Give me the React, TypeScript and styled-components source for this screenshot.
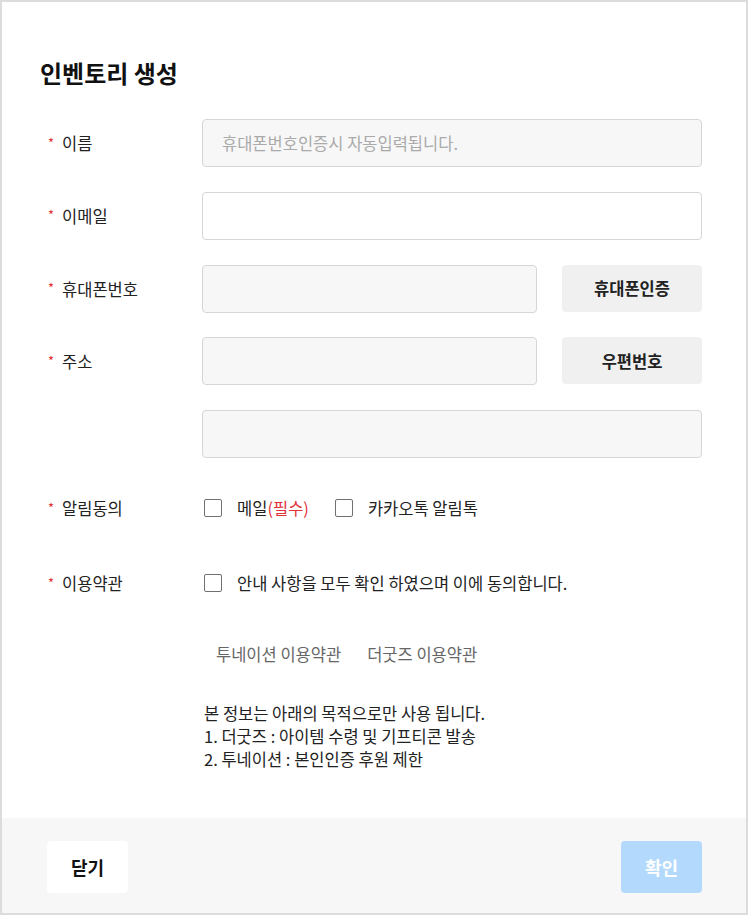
import React from 'react'
import styled, { createGlobalStyle } from 'styled-components'

const GlobalStyle = createGlobalStyle`
    * {
        box-sizing: border-box;
    }
    html, body {
        margin: 0;
        padding: 0;
        background: #fff;
    }
    body {
        font-family: "Noto Sans CJK KR", "Noto Sans", sans-serif;
        color: #222;
    }
`

const App = () => {
    return (
        <>
            <GlobalStyle />
            <Modal>
                <Content>
                    <Title>인벤토리 생성</Title>

                    <Fields>
                        <Row>
                            <Label><Star>*</Star>이름</Label>
                            <Input readOnly placeholder='휴대폰번호인증시 자동입력됩니다.' />
                        </Row>
                        <Row>
                            <Label><Star>*</Star>이메일</Label>
                            <Input $white />
                        </Row>
                        <Row>
                            <Label><Star>*</Star>휴대폰번호</Label>
                            <InputGroup>
                                <Input readOnly />
                                <SideButton>휴대폰인증</SideButton>
                            </InputGroup>
                        </Row>
                        <Row>
                            <Label><Star>*</Star>주소</Label>
                            <InputGroup>
                                <Input readOnly />
                                <SideButton>우편번호</SideButton>
                            </InputGroup>
                        </Row>
                        <Row>
                            <span />
                            <Input readOnly />
                        </Row>
                    </Fields>

                    <CheckRow $top={38}>
                        <Label><Star>*</Star>알림동의</Label>
                        <CheckGroup>
                            <CheckItem>
                                <Box />
                                <span>메일<Required>(필수)</Required></span>
                            </CheckItem>
                            <CheckItem>
                                <Box />
                                <span>카카오톡 알림톡</span>
                            </CheckItem>
                        </CheckGroup>
                    </CheckRow>

                    <CheckRow $top={51}>
                        <Label><Star>*</Star>이용약관</Label>
                        <CheckGroup>
                            <CheckItem>
                                <Box />
                                <span>안내 사항을 모두 확인 하였으며 이에 동의합니다.</span>
                            </CheckItem>
                        </CheckGroup>
                    </CheckRow>

                    <Terms>
                        <TermLink>투네이션 이용약관</TermLink>
                        <TermLink>더굿즈 이용약관</TermLink>
                    </Terms>

                    <Notice>
                        본 정보는 아래의 목적으로만 사용 됩니다.<br />
                        1. 더굿즈 : 아이템 수령 및 기프티콘 발송<br />
                        2. 투네이션 : 본인인증 후원 제한
                    </Notice>
                </Content>

                <Footer>
                    <CloseButton>닫기</CloseButton>
                    <ConfirmButton disabled>확인</ConfirmButton>
                </Footer>
            </Modal>
        </>
    )
}

const Modal = styled.div`
    width: 748px;
    height: 915px;
    border: 2px solid #dcdcdc;
    display: flex;
    flex-direction: column;
    background: #fff;
`

const Content = styled.div`
    flex: 1;
    padding: 56px 44px 0 38px;
`

const Title = styled.h2`
    margin: 0 0 31px;
    font-size: 24px;
    line-height: 30px;
    font-weight: 700;
    color: #111;
`

const Fields = styled.div`
    display: flex;
    flex-direction: column;
    gap: 24.75px;
`

const Row = styled.div`
    display: grid;
    grid-template-columns: 154px 1fr;
    align-items: start;
    padding-left: 8px;
`

const Label = styled.div`
    display: flex;
    align-items: center;
    height: 48px;
    font-size: 16.5px;
    color: #222;
`

const Star = styled.span`
    color: #e0323a;
    font-size: 13px;
    margin-right: 8px;
    position: relative;
    top: -1px;
`

const Input = styled.input<{ $white?: boolean }>`
    width: 100%;
    height: 48px;
    border: 1px solid #d6d6d6;
    border-radius: 4px;
    background: ${({ $white }) => $white ? '#fff' : '#f7f7f7'};
    padding: 0 19px;
    font-family: inherit;
    font-size: 16.5px;
    color: #222;
    outline: none;

    &::placeholder {
        color: #aaa;
    }
`

const InputGroup = styled.div`
    display: flex;
    gap: 25px;
    align-items: flex-start;
`

const SideButton = styled.button`
    flex: 0 0 140px;
    height: 47px;
    border: none;
    border-radius: 4px;
    background: #f0f0f0;
    font-family: inherit;
    font-size: 16.5px;
    font-weight: 700;
    color: #222;
`

const CheckRow = styled(Row)<{ $top: number }>`
    margin-top: ${({ $top }) => $top}px;
    align-items: center;

    ${Label} {
        height: 24px;
    }
`

const CheckGroup = styled.div`
    display: flex;
    align-items: center;
    gap: 26px;
    padding-left: 2px;
`

const CheckItem = styled.label`
    display: flex;
    align-items: center;
    gap: 15px;
    font-size: 16.5px;
    line-height: 24px;
    color: #222;
`

const Box = styled.span`
    width: 18px;
    height: 18px;
    border: 1.5px solid #707070;
    border-radius: 2px;
    background: #fff;
`

const Required = styled.span`
    color: #e0323a;
`

const Terms = styled.div`
    display: flex;
    gap: 2px;
    margin: 47px 0 0 164px;
`

const TermLink = styled.a`
    padding: 0 12px;
    font-size: 16.5px;
    line-height: 24px;
    color: #666;
`

const Notice = styled.p`
    margin: 36px 0 0 164px;
    font-size: 16.5px;
    line-height: 23px;
    color: #222;
`

const Footer = styled.div`
    height: 95px;
    background: #f7f7f7;
    display: flex;
    justify-content: space-between;
    align-items: flex-start;
    padding: 23px 44px 0 45px;
`

const FooterButton = styled.button`
    width: 81px;
    height: 52px;
    border: none;
    border-radius: 4px;
    font-family: inherit;
    font-size: 18px;
    font-weight: 700;
`

const CloseButton = styled(FooterButton)`
    background: #fff;
    color: #111;
`

const ConfirmButton = styled(FooterButton)`
    background: #b3dafc;
    color: #fff;
`

export default App
